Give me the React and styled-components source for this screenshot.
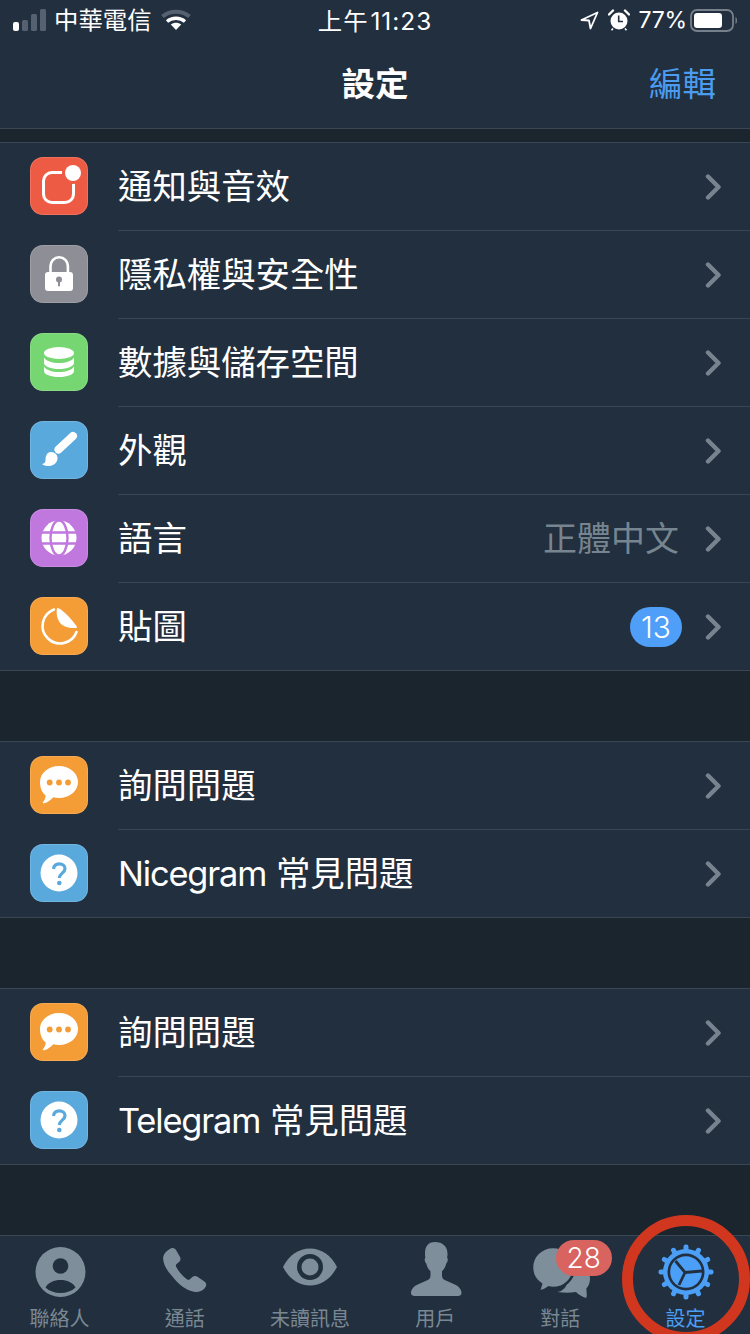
import React from "react";
import styled, { createGlobalStyle } from "styled-components";

const FONT = `"Inter", "Noto Sans CJK TC", "Liberation Sans", sans-serif`;

const GlobalStyle = createGlobalStyle`
  html, body { margin: 0; padding: 0; background: #1b252e; }
  * { box-sizing: border-box; }
`;

const Page = styled.div`
  width: 750px;
  height: 1334px;
  display: flex;
  flex-direction: column;
  overflow: hidden;
  background: #1b252e;
  color: #fff;
  font-family: ${FONT};
`;

const Top = styled.header`
  background: #222f3e;
  border-bottom: 1px solid #3a4653;
  height: 129px;
`;

const StatusBar = styled.div`
  height: 40px;
  display: grid;
  grid-template-columns: 1fr auto 1fr;
  align-items: center;
  padding: 0 13px;
  font-size: 24px;
`;

const StatusLeft = styled.div`
  display: flex;
  align-items: center;
`;

const StatusRight = styled.div`
  display: flex;
  align-items: center;
  justify-content: flex-end;
`;

const Carrier = styled.span`
  margin: 0 9px 0 8px;
  padding-bottom: 4px;
  font-size: 24.4px;
`;

const Time = styled.span`
  font-size: 24.4px;
  letter-spacing: 1px;
  word-spacing: -6px;
  padding-bottom: 2px;
`;

const Percent = styled.span`
  margin: 0 3px 0 9px;
  font-size: 23px;
  letter-spacing: -0.2px;
`;

const NavBar = styled.div`
  height: 88px;
  display: grid;
  grid-template-columns: 1fr auto 1fr;
  align-items: center;
  padding: 0 34px;
`;

const Title = styled.h1`
  grid-column: 2;
  margin: 0;
  padding-bottom: 6px;
  font-size: 33.5px;
  font-weight: 700;
`;

const Edit = styled.span`
  justify-self: end;
  padding-bottom: 6px;
  font-size: 33.5px;
  color: #4b9cf0;
`;

const Main = styled.main`
  flex: 1;
  display: flex;
  flex-direction: column;
  gap: 70px;
  padding-top: 13px;
`;

const Group = styled.section`
  background: #222f3e;
  border-top: 1px solid #3a4653;
  border-bottom: 1px solid #3a4653;
`;

const Row = styled.div`
  display: flex;
  height: ${(p) => (p.$last ? 87 : 88)}px;
  padding: 14px 0 0 30px;
`;

const Tile = styled.div`
  flex: none;
  width: 58px;
  height: 58px;
  border-radius: 13px;
  background: ${(p) => p.$bg};
  box-shadow: inset 0 0 0 1px rgba(255, 255, 255, 0.14);
  svg { display: block; }
`;

const RowBody = styled.div`
  flex: 1;
  display: flex;
  align-items: center;
  height: 88px;
  margin: -14px 0 0 30px;
  padding-right: 28px;
  border-bottom: ${(p) => (p.$last ? "none" : "1px solid #3a4653")};
`;

const Label = styled.span`
  flex: 1;
  padding-bottom: 6px;
  font-size: 34.4px;
  white-space: nowrap;
`;

const Latin = styled.span`
  letter-spacing: -1.15px;
`;

const Value = styled.span`
  padding-bottom: 4px;
  font-size: 34px;
  color: #76858f;
  margin-right: 26px;
`;

const Count = styled.span`
  width: 52px;
  height: 40px;
  margin-right: 23px;
  border-radius: 20px;
  background: #4f9ff8;
  font-size: 30px;
  font-weight: 300;
  line-height: 40px;
  text-align: center;
`;

const TabBar = styled.nav`
  position: relative;
  height: 99px;
  background: #222f3e;
  border-top: 1px solid #3a4653;
  display: grid;
  grid-template-columns: repeat(6, 125.2px);
  padding-top: 4px;
`;

const Tab = styled.div`
  position: relative;
  left: -3px;
  display: flex;
  flex-direction: column;
  align-items: center;
  color: ${(p) => (p.$active ? "#4c9ff6" : "#7e8e9b")};
  svg { display: block; }
`;

const TabLabel = styled.span`
  margin-top: 7px;
  font-size: 20px;
  line-height: 24px;
  color: ${(p) => (p.$active ? "#4c9ff6" : "#7a8893")};
`;

const TabBadge = styled.span`
  position: absolute;
  top: 0;
  left: 58px;
  width: 56px;
  height: 36px;
  border-radius: 18px;
  background: #d8635f;
  color: #fff;
  font-size: 28px;
  font-weight: 300;
  line-height: 36px;
  text-align: center;
`;

const Ring = styled.div`
  position: absolute;
  top: -21px;
  left: 622px;
  width: 128px;
  height: 128px;
  border: 11.5px solid #d1371f;
  border-radius: 50%;
  pointer-events: none;
`;

const Chevron = () => (
  <svg width="17" height="26" viewBox="0 0 17 26" fill="none">
    <path d="M3 2.500 13.500 13 3 23.500" stroke="#77848f" strokeWidth="4.400" strokeLinecap="round" strokeLinejoin="round" />
  </svg>
);

const TileSvg = ({ children }) => (
  <svg width="58" height="58" viewBox="0 0 58 58" fill="none">{children}</svg>
);

const BellIcon = () => (
  <TileSvg>
    <rect x="13.500" y="15.500" width="30" height="30" rx="8.500" stroke="#fff" strokeWidth="3" />
    <circle cx="43" cy="16" r="11" fill="#ee5b44" />
    <circle cx="43" cy="16" r="8" fill="#fff" />
  </TileSvg>
);

const LockIcon = () => (
  <TileSvg>
    <path d="M20.500 30v-9a8.700 8.700 0 0 1 17.400 0v9" stroke="#fff" strokeWidth="2.600" />
    <rect x="15" y="27" width="28" height="19" rx="3" fill="#fff" />
    <circle cx="29" cy="34.500" r="3" fill="#8e8e96" />
    <rect x="28" y="35" width="2" height="6.500" rx="1" fill="#8e8e96" />
  </TileSvg>
);

const DataIcon = () => (
  <TileSvg>
    <ellipse cx="29" cy="20" rx="15" ry="6" fill="#fff" />
    <path d="M14 24.500c2 3.600 8 5.500 15 5.500s13-1.900 15-5.500v5.500c0 3.300-6.700 6-15 6s-15-2.700-15-6z" fill="#fff" />
    <path d="M14 33.500c2 3.600 8 5.500 15 5.500s13-1.900 15-5.500v4.500c0 3.600-6.700 6-15 6s-15-2.400-15-6z" fill="#fff" />
  </TileSvg>
);

const BrushIcon = () => (
  <TileSvg>
    <path d="M28.500 28.500 43 15" stroke="#fff" strokeWidth="8" strokeLinecap="round" />
    <path d="M21 31c4 0 7 3 6.500 7-.6 4.500-5 7-9 7-2.500 0-5-.6-6.500-2 2.500-.4 3.500-1.500 3.500-4 0-4.500 2-8 5.500-8z" fill="#fff" />
  </TileSvg>
);

const GlobeIcon = () => (
  <TileSvg>
    <circle cx="29" cy="29" r="17.500" fill="#fff" />
    <ellipse cx="29" cy="29" rx="8.500" ry="17.500" stroke="#c077de" strokeWidth="2.400" />
    <path d="M10 23.500h38M10 34.500h38" stroke="#c077de" strokeWidth="2.400" />
  </TileSvg>
);

const StickerIcon = () => (
  <TileSvg>
    <path d="M24 12.500A17.500 17.500 0 1 0 46.500 35" stroke="#fff" strokeWidth="2.600" strokeLinecap="round" />
    <path d="M27 11c1.500 0 3 .8 4.500 2 5.500 4 11 10.500 15 16 .8 1.200.8 2-.5 2-9 .5-16-2-18.500-10-.8-2.800-1.200-6.500-.5-10z" fill="#fff" />
  </TileSvg>
);

const BubbleIcon = () => (
  <TileSvg>
    <path d="M29 10c10.500 0 19 7 19 16s-8.500 16-19 16c-2 0-3.900-.3-5.700-.7-2.500 2.900-6 5.200-9 6-1.500.3-2-.6-1.100-1.500 1.500-1.700 2.400-4 2.500-6.300C11.900 36.600 10 31.500 10 26c0-9 8.500-16 19-16z" fill="#fff" />
    <circle cx="19.700" cy="26.500" r="2.900" fill="#f49d37" />
    <circle cx="29" cy="26.500" r="2.900" fill="#f49d37" />
    <circle cx="38" cy="26.500" r="2.900" fill="#f49d37" />
  </TileSvg>
);

const HelpIcon = () => (
  <TileSvg>
    <circle cx="29" cy="29" r="18.500" fill="#fff" />
    <path d="M23.500 25c.3-3.300 2.700-5.200 5.800-5.200 3.300 0 5.700 2 5.700 4.900 0 4.300-5.700 4.600-5.700 9.300" stroke="#5aa9dc" strokeWidth="3.200" />
    <circle cx="29.300" cy="39" r="2.300" fill="#5aa9dc" />
  </TileSvg>
);

const TabSvg = ({ children }) => (
  <svg width="60" height="60" viewBox="0 0 60 60" fill="none">{children}</svg>
);

const ContactIcon = () => (
  <TabSvg>
    <circle cx="30.500" cy="32" r="25" fill="currentColor" />
    <circle cx="30.500" cy="26" r="7.800" fill="#222f3e" />
    <path d="M15.500 47.500C18 42.500 24 40 30.500 40s12.500 2.500 15 7.500c-3.800 3.600-9 5.500-15 5.500s-11.200-1.900-15-5.500z" fill="#222f3e" />
  </TabSvg>
);

const PhoneIcon = () => (
  <TabSvg>
    <path transform="translate(0.500 -1) scale(1.070)" d="M13 9.500c2.300-1.700 5-1.300 6.300.9l3.500 6.300c1 1.800.7 3.400-.8 4.700l-2.300 2c-.8.700-.9 1.500-.4 2.500 2.200 4.300 6.300 9.300 10.300 11.900.9.600 1.700.5 2.500-.2l2.300-2c1.500-1.300 3.200-1.500 4.800-.4l6.500 4.500c2.100 1.500 2.400 4 .5 6-2.500 2.700-6 4.300-10.300 3.600-6.700-1.100-14.500-6.700-20.300-14.500C9 28 6.400 21 7.300 16.300c.5-2.800 2.900-5.100 5.700-6.800z" fill="currentColor" />
  </TabSvg>
);

const EyeIcon = () => (
  <TabSvg>
    <path d="M3 27C9 15 19 8.500 30 8.500S51 15 57 27c-6 12-16 18.500-27 18.500S9 39 3 27z" fill="currentColor" />
    <circle cx="30" cy="27" r="13" fill="#222f3e" />
    <circle cx="30" cy="27" r="8.500" fill="currentColor" />
  </TabSvg>
);

const UserIcon = () => (
  <TabSvg>
    <path d="M30 2c7.500 0 12.500 4.500 12.500 11.500 0 1.500 0 2.500-.4 3.700 1.200 1.800.8 4.800-.9 6.300-.7 3.500-2.200 6-4.200 7.700v4.300c0 2.300 1 3.800 3.300 4.800l9.500 4.100c4 1.800 6.700 5 6.700 8.600 0 2.300-1.600 3-3.500 3H9.500C7.600 56 6 55.300 6 53c0-3.600 2.700-6.800 6.700-8.600l9.500-4.100c2.300-1 3.300-2.500 3.300-4.800v-4.300c-2-1.700-3.500-4.200-4.200-7.700-1.700-1.500-2.100-4.500-.9-6.300-.4-1.200-.4-2.200-.4-3.700C20 6.500 23 2 30 2z" fill="currentColor" />
  </TabSvg>
);

const ChatsIcon = () => (
  <TabSvg>
    <path d="M42 22c9.500 0 18 7.500 18 17 0 3.600-1.200 6.800-3.700 9.500.2 3.200.9 6.300 0 9.500-4-1.300-7.800-3.300-10.300-6-6 1-12 1-18.500 0 6-1 12-5 14.500-30z" fill="currentColor" />
    <path d="M23 7c11.600 0 21 9 21 20.500S34.600 48 23 48c-1.600 0-3-.2-4.500-.5-3 2.500-6.500 3.800-11 4 2-2.200 3-4.500 3.500-7.300C5.500 40.500 2 34.500 2 27.500 2 16 11.400 7 23 7z" fill="currentColor" stroke="#222f3e" strokeWidth="2.600" />
  </TabSvg>
);

const GearIcon = () => (
  <TabSvg>
    {Array.from({ length: 12 }, (_, i) => (
      <rect key={i} x="27.500" y="4.500" width="5" height="8" rx="2.200" fill="currentColor" transform={`rotate(${i * 30} 30 32)`} />
    ))}
    <circle cx="30" cy="32" r="23" fill="currentColor" />
    <circle cx="30" cy="32" r="18.500" fill="#222f3e" />
    <circle cx="30" cy="32" r="15.800" fill="currentColor" />
    <path d="M29 32.500 46 31M29 32.500 19.500 21M29 32.500 23 45" stroke="#222f3e" strokeWidth="2.800" />
  </TabSvg>
);

const SignalBars = () => (
  <svg width="33" height="22" viewBox="0 0 33 22">
    <rect x="0" y="13" width="6" height="9" rx="2" fill="#fff" />
    <rect x="9" y="11" width="6" height="11" rx="1.500" fill="#556170" />
    <rect x="18" y="5" width="6" height="17" rx="1.500" fill="#556170" />
    <rect x="27" y="0" width="6" height="22" rx="1.500" fill="#556170" />
  </svg>
);

const WifiIcon = () => (
  <svg width="30" height="22" viewBox="0 0 30 22" fill="none">
    <path d="M1.500 7.500C9 1 21 1 28.500 7.500" stroke="#556170" strokeWidth="4" />
    <path d="M6 12.500c5-4.300 13-4.300 18 0" stroke="#fff" strokeWidth="3.400" />
    <path d="M9.800 15.600 15 21l5.200-5.400c-3-2.400-7.400-2.400-10.400 0z" fill="#fff" />
  </svg>
);

const ArrowIcon = () => (
  <svg width="19" height="19" viewBox="0 0 19 19" fill="none">
    <path d="M1.500 9 17.500 1.500 10.500 17.500 9 9.500z" stroke="#fff" strokeWidth="1.800" strokeLinejoin="round" />
  </svg>
);

const AlarmIcon = () => (
  <svg width="22" height="22" viewBox="0 0 22 22" fill="none" style={{ marginLeft: 9 }}>
    <circle cx="11" cy="12" r="8.500" fill="#fff" />
    <path d="M10.700 6.500V12.500H15" stroke="#222f3e" strokeWidth="1.600" />
    <path d="M1 5.500 5 1.500M21 5.500 17 1.500" stroke="#fff" strokeWidth="2.400" strokeLinecap="round" />
    <path d="M5 19.500 3.500 21.200M17 19.500 18.500 21.200" stroke="#fff" strokeWidth="1.600" />
  </svg>
);

const BatteryIcon = () => (
  <svg width="47" height="23" viewBox="0 0 47 23" fill="none">
    <rect x="1" y="1" width="42" height="21" rx="6" stroke="#76808b" strokeWidth="1.800" />
    <rect x="4" y="4" width="28" height="15" rx="3.200" fill="#fff" />
    <path d="M45.500 8v7c1-.4 1.500-2 1.500-3.500S46.500 8.400 45.500 8z" fill="#76808b" />
  </svg>
);

const groups = [
  [
    { icon: <BellIcon />, bg: "#ee5b44", label: "通知與音效" },
    { icon: <LockIcon />, bg: "#8e8e96", label: "隱私權與安全性" },
    { icon: <DataIcon />, bg: "#76d672", label: "數據與儲存空間" },
    { icon: <BrushIcon />, bg: "#5aa9dc", label: "外觀" },
    { icon: <GlobeIcon />, bg: "#c077de", label: "語言", value: "正體中文" },
    { icon: <StickerIcon />, bg: "#f49d37", label: "貼圖", count: 13 },
  ],
  [
    { icon: <BubbleIcon />, bg: "#f49d37", label: "詢問問題" },
    { icon: <HelpIcon />, bg: "#5aa9dc", brand: "Nicegram", label: " 常見問題" },
  ],
  [
    { icon: <BubbleIcon />, bg: "#f49d37", label: "詢問問題" },
    { icon: <HelpIcon />, bg: "#5aa9dc", brand: "Telegram", label: " 常見問題" },
  ],
];

const tabs = [
  { icon: <ContactIcon />, label: "聯絡人" },
  { icon: <PhoneIcon />, label: "通話" },
  { icon: <EyeIcon />, label: "未讀訊息" },
  { icon: <UserIcon />, label: "用戶" },
  { icon: <ChatsIcon />, label: "對話", badge: 28 },
  { icon: <GearIcon />, label: "設定", active: true },
];

export default function App() {
  return (
    <Page>
      <GlobalStyle />
      <Top>
        <StatusBar>
          <StatusLeft>
            <SignalBars />
            <Carrier>中華電信</Carrier>
            <WifiIcon />
          </StatusLeft>
          <Time>上午 11:23</Time>
          <StatusRight>
            <ArrowIcon />
            <AlarmIcon />
            <Percent>77%</Percent>
            <BatteryIcon />
          </StatusRight>
        </StatusBar>
        <NavBar>
          <Title>設定</Title>
          <Edit>編輯</Edit>
        </NavBar>
      </Top>

      <Main>
        {groups.map((rows, g) => (
          <Group key={g}>
            {rows.map((row, i) => {
              const last = i === rows.length - 1;
              return (
                <Row key={i} $last={last}>
                  <Tile $bg={row.bg}>{row.icon}</Tile>
                  <RowBody $last={last}>
                    <Label>
                      {row.brand && <Latin>{row.brand}</Latin>}
                      {row.label}
                    </Label>
                    {row.value && <Value>{row.value}</Value>}
                    {row.count && <Count>{row.count}</Count>}
                    <Chevron />
                  </RowBody>
                </Row>
              );
            })}
          </Group>
        ))}
      </Main>

      <TabBar>
        {tabs.map((tab) => (
          <Tab key={tab.label} $active={tab.active}>
            {tab.icon}
            <TabLabel $active={tab.active}>{tab.label}</TabLabel>
            {tab.badge && <TabBadge>{tab.badge}</TabBadge>}
          </Tab>
        ))}
        <Ring />
      </TabBar>
    </Page>
  );
}
